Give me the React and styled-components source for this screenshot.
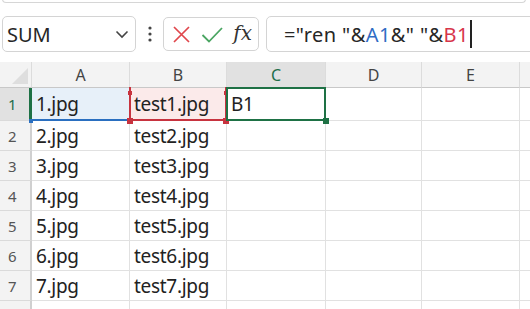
import React from "react";
import styled, { createGlobalStyle, css } from "styled-components";

const Global = createGlobalStyle`
  body {
    margin: 0;
    background: #ffffff;
    font-family: "Noto Sans", "Open Sans", sans-serif;
  }
`;

const Page = styled.div`
  width: 530px;
  height: 309px;
  overflow: hidden;
  background: #ffffff;
`;

const TopEdge = styled.div`
  height: 3px;
  margin: 0 4px 0 2px;
  border: 1px solid #d6d6d6;
  border-top: none;
  border-radius: 0 0 5px 5px;
  margin-top: -1px;
`;

const Toolbar = styled.div`
  display: flex;
  align-items: center;
  height: 36px;
  margin-top: 13px;
  padding-left: 2px;
`;

const Box = styled.div`
  height: 34px;
  border: 1px solid #d4d4d4;
  border-radius: 5px;
  display: flex;
  align-items: center;
  background: #fff;
`;

const NameBox = styled(Box)`
  justify-content: space-between;
  padding: 0 6px 0 4px;
  box-sizing: content-box;
  width: 122px;
  font-size: 20px;
  color: #262626;
`;

const Dots = styled.div`
  width: 27px;
  display: flex;
  justify-content: center;
`;

const ButtonBox = styled(Box)`
  width: 96px;
  justify-content: space-between;
  padding: 0 6px 0 8px;
  box-sizing: border-box;
`;

const Fx = styled.span`
  font-family: "DejaVu Serif", "Liberation Serif", serif;
  font-style: italic;
  font-size: 20px;
  color: #333;
  margin-top: -3px;
`;

const FormulaBox = styled(Box)`
  margin-left: 7px;
  flex: 1;
  margin-right: -10px;
  padding-left: 17px;
  font-size: 20px;
  color: #262626;
  letter-spacing: 0.4px;
  white-space: pre;
`;

const Ref = styled.span`
  color: ${(p) => p.$c};
`;

const Caret = styled.span`
  display: inline-block;
  width: 2px;
  height: 28px;
  background: #222;
  vertical-align: middle;
  margin-left: 1px;
`;

const Grid = styled.div`
  display: grid;
  grid-template-columns: 32px 98px 97px 99px 96px 98px 40px;
  grid-template-rows: 26px 33px repeat(6, 30px) 20px;
  margin-top: 10px;
`;

const Corner = styled.div`
  background: #f3f3f3;
  border-right: 1px solid #dcdcdc;
  border-bottom: 1px solid #c8c8c8;
  position: relative;
  &::after {
    content: "";
    position: absolute;
    right: 3px;
    bottom: 3px;
    border-left: 16px solid transparent;
    border-bottom: 16px solid #dedede;
  }
`;

const ColHead = styled.div`
  background: ${(p) => (p.$sel ? "#e1e1e1" : "#f3f3f3")};
  color: ${(p) => (p.$sel ? "#1e6e4a" : "#444")};
  border-right: 1px solid #dcdcdc;
  border-bottom: 1px solid #c8c8c8;
  font-size: 16px;
  display: flex;
  align-items: center;
  justify-content: center;
  padding-top: 1px;
`;

const RowHead = styled.div`
  background: ${(p) => (p.$sel ? "#e1e1e1" : "#f3f3f3")};
  color: ${(p) => (p.$sel ? "#1e6e4a" : "#555")};
  border-right: ${(p) => (p.$sel ? "3px solid #1e7145" : "2px solid #d0d0d0")};
  border-bottom: 1px solid #dadada;
  font-size: 15px;
  display: flex;
  align-items: center;
  padding-left: 8px;
`;

const Cell = styled.div`
  position: relative;
  z-index: ${(p) => (p.$over ? 2 : "auto")};
  background: ${(p) => p.$fill || "#fff"};
  border-right: 1px solid #e1e1e1;
  border-bottom: 1px solid #e1e1e1;
  font-size: 19px;
  color: #222;
  display: flex;
  align-items: center;
  padding-left: 4px;
  letter-spacing: -0.3px;
  white-space: nowrap;
`;

const Outline = styled.div`
  position: absolute;
  left: -1px;
  top: -1px;
  right: -1px;
  bottom: -1px;
  pointer-events: none;
  ${(p) =>
    p.$sides === "bottom"
      ? css`border-bottom: 2px solid ${p.$c};`
      : p.$sides === "lrb"
      ? css`border: 2px solid ${p.$c}; border-top: none;`
      : css`border: 2px solid ${p.$c};`}
`;

const Handle = styled.div`
  position: absolute;
  width: ${(p) => p.$s}px;
  height: ${(p) => p.$s}px;
  background: ${(p) => p.$c};
  ${(p) => p.$pos}
`;

const cols = ["A", "B", "C", "D", "E", ""];

export default function App() {
  const rows = [1, 2, 3, 4, 5, 6, 7, 8];
  return (
    <Page>
      <Global />
      <TopEdge />
      <Toolbar>
        <NameBox>
          <span>SUM</span>
          <svg width="14" height="9" viewBox="0 0 14 9">
            <path d="M1.5 1.5 L7 7 L12.5 1.5" fill="none" stroke="#444" strokeWidth="1.6" />
          </svg>
        </NameBox>
        <Dots>
          <svg width="4" height="16" viewBox="0 0 4 16">
            <circle cx="2" cy="2" r="1.6" fill="#444" />
            <circle cx="2" cy="8" r="1.6" fill="#444" />
            <circle cx="2" cy="14" r="1.6" fill="#444" />
          </svg>
        </Dots>
        <ButtonBox>
          <svg width="19" height="19" viewBox="0 0 19 19">
            <path d="M2 2 L17 17 M17 2 L2 17" stroke="#e0474c" strokeWidth="1.7" />
          </svg>
          <svg width="22" height="17" viewBox="0 0 22 17">
            <path d="M1.5 9 L8 15.5 L21 2" fill="none" stroke="#4aa562" strokeWidth="1.8" />
          </svg>
          <Fx>fx</Fx>
        </ButtonBox>
        <FormulaBox>
          ="ren "&amp;<Ref $c="#2f6cc4">A1</Ref>&amp;" "&amp;<Ref $c="#d7344a">B1</Ref>
          <Caret />
        </FormulaBox>
      </Toolbar>
      <Grid>
        <Corner />
        {cols.map((c, i) => (
          <ColHead key={i} $sel={c === "C"}>{c}</ColHead>
        ))}
        {rows.map((r) => (
          <React.Fragment key={r}>
            <RowHead $sel={r === 1}>{r <= 7 ? r : ""}</RowHead>
            {r === 1 ? (
              <>
                <Cell $fill="#e7f0f9" $over>
                  1.jpg
                  <Outline $sides="bottom" $c="#2a6fc0" />
                  <Handle $s={4} $c="#2a6fc0" $pos="left:-3px;bottom:-3px;" />
                </Cell>
                <Cell $fill="#fbeaea" $over>
                  test1.jpg
                  <Outline $sides="lrb" $c="#c7333f" />
                  <Handle $s={4} $c="#c7333f" $pos="left:-2px;top:3px;" />
                  <Handle $s={6} $c="#c7333f" $pos="left:-3px;bottom:-4px;" />
                  <Handle $s={4} $c="#c7333f" $pos="right:-2px;top:3px;" />
                  <Handle $s={6} $c="#c7333f" $pos="right:-3px;bottom:-4px;" />
                </Cell>
                <Cell $over>
                  B1
                  <Outline $c="#1e7145" />
                  <Handle $s={6} $c="#1e7145" $pos="right:-4px;bottom:-4px;" />
                </Cell>
              </>
            ) : (
              <>
                <Cell>{r <= 7 ? `${r}.jpg` : ""}</Cell>
                <Cell>{r <= 7 ? `test${r}.jpg` : ""}</Cell>
                <Cell />
              </>
            )}
            <Cell />
            <Cell />
            <Cell />
          </React.Fragment>
        ))}
      </Grid>
    </Page>
  );
}
